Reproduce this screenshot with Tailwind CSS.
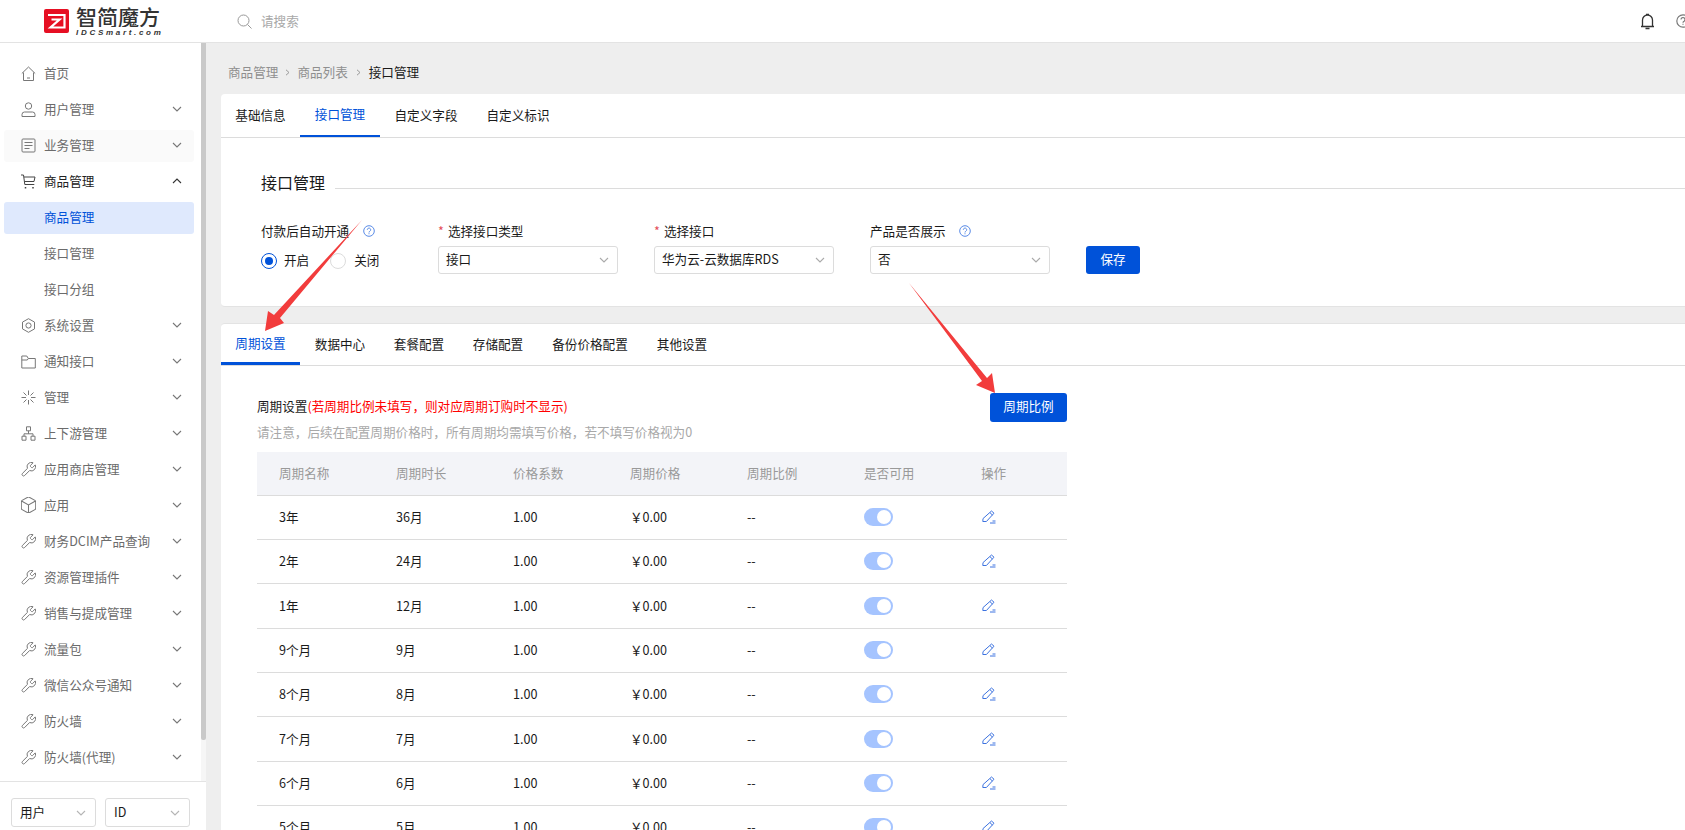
<!DOCTYPE html>
<html lang="zh-CN">
<head>
  <meta charset="UTF-8" />
  <title>接口管理</title>
  <script src="https://cdn.jsdelivr.net/npm/@tailwindcss/browser@4"></script>
</head>
<body class="h-[830px] w-[1685px] overflow-hidden bg-[#eeeeee] text-[12.6px] leading-5 text-[#1a1a1a] font-['Noto_Sans_CJK_SC',sans-serif]">

  <!-- icon sprites -->
  <svg class="hidden">
    <symbol id="i-wrench" viewBox="1.500 1.500 21 21"><path fill="none" stroke="currentColor" stroke-width="1.400" d="M14.700 6.300a1 1 0 0 0 0 1.400l1.600 1.600a1 1 0 0 0 1.400 0l3.770-3.770a6 6 0 0 1-7.940 7.940l-6.910 6.910a2.120 2.120 0 0 1-3-3l6.910-6.910a6 6 0 0 1 7.940-7.940l-3.760 3.760z"/></symbol>
    <symbol id="i-chevron" viewBox="0 0 12 12"><path fill="none" stroke="currentColor" stroke-width="1.100" d="M2 4l4 4 4-4"/></symbol>
    <symbol id="i-help" viewBox="0 0 12 12"><circle cx="6" cy="6" r="5.300" fill="none" stroke="currentColor"/><path fill="none" stroke="currentColor" d="M4.300 4.800a1.700 1.700 0 1 1 2.600 1.400c-.6.300-.9.600-.9 1.300"/><path fill="currentColor" d="M5.500 8.300h1v1h-1z"/></symbol>
    <symbol id="i-edit" viewBox="0 0 14 14"><path fill="none" stroke="currentColor" d="M9.500 1L12 3.200 4.400 11.500H.8L1 8.600zM8 2.700l2.400 2.300M8 13h5.500M10.500 11h3"/></symbol>
  </svg>

  <!-- top bar -->
  <header class="flex h-[43px] items-center border-b border-[#e3e3e3] bg-white">
    <div class="ml-[44px] flex w-[193px] items-center gap-[7px]">
      <svg class="h-[24px] w-[25px] shrink-0" viewBox="0 0 25 24">
        <rect width="25" height="24" rx="2" fill="#e60f23"/>
        <path fill="none" stroke="#fff" stroke-width="2.200" d="M4 6h16.500v12.500H10M7.500 10.500h8l-9 8h3.500"/>
      </svg>
      <div class="flex w-[84px] flex-col">
        <span class="h-[21px] overflow-hidden text-[21px] leading-[21px] font-medium whitespace-nowrap text-[#333]">智简魔方</span>
        <span class="mt-[1px] text-[8px] leading-[9px] font-bold tracking-[2.700px] whitespace-nowrap text-[#333] italic font-['Liberation_Sans',sans-serif]">IDCSmart.com</span>
      </div>
    </div>
    <svg class="h-[15px] w-[15px] text-[#999]" viewBox="0 0 15 15"><circle cx="6.500" cy="6.500" r="5.500" fill="none" stroke="currentColor"/><path stroke="currentColor" d="M10.500 10.500l4 4"/></svg>
    <span class="ml-[9px] text-[#a8a8a8]">请搜索</span>
    <div class="ml-auto flex items-center gap-[21px]">
      <svg class="h-[17px] w-[15px] text-[#333]" viewBox="0 0 15 17"><path fill="none" stroke="currentColor" stroke-width="1.300" d="M1 13.500h13M2.500 13.500V7a5 5 0 0 1 10 0v6.500M6 1.500h3M5.500 15.500h4"/></svg>
      <svg class="-mr-[5px] h-[14px] w-[14px] text-[#777]" viewBox="0 0 12 12"><use href="#i-help"/></svg>
    </div>
  </header>

  <div class="flex h-[787px]">
    <!-- sidebar -->
    <aside class="flex w-[206px] shrink-0 flex-col bg-white">
      <div class="flex h-[738px]">
        <nav class="h-full w-[201px] overflow-hidden pt-[12px] pr-[7px] pl-[4px] text-[#6b6b6b]">
          <a class="flex h-[36px] items-center rounded-[3px] pl-[17px]">
            <svg class="mr-[8px] h-[15px] w-[15px] text-[#777]" viewBox="0 0 15 15"><path fill="none" stroke="currentColor" d="M.8 7.500L7.500 1l6.700 6.500M2.500 6.500v8h10v-8M6 12h3"/></svg>首页</a>
          <a class="flex h-[36px] items-center rounded-[3px] pl-[17px]">
            <svg class="mr-[8px] h-[15px] w-[15px] text-[#777]" viewBox="0 0 15 15"><circle cx="7.500" cy="4" r="3.200" fill="none" stroke="currentColor"/><path fill="none" stroke="currentColor" d="M1 14.500v-2a2.500 2.500 0 0 1 2.500-2.500h8a2.500 2.500 0 0 1 2.500 2.500v2z"/></svg>用户管理
            <svg class="mr-[11px] ml-auto h-[12px] w-[12px] text-[#777]"><use href="#i-chevron"/></svg></a>
          <a class="mt-[3px] mb-[1px] flex h-[32px] items-center rounded-[3px] bg-[#fafafa] pb-[2px] pl-[17px]">
            <svg class="mr-[8px] h-[15px] w-[15px] text-[#777]" viewBox="0 0 15 15"><rect x="1" y="1" width="13" height="13" rx="1" fill="none" stroke="currentColor"/><path stroke="currentColor" d="M3.500 4.500h8M3.500 7.500h8M3.500 10.500h5"/></svg>业务管理
            <svg class="mr-[11px] ml-auto h-[12px] w-[12px] text-[#777]"><use href="#i-chevron"/></svg></a>
          <a class="flex h-[36px] items-center rounded-[3px] pl-[17px] text-[#222]">
            <svg class="mr-[8px] h-[15px] w-[15px] text-[#444]" viewBox="0 0 15 15"><path fill="none" stroke="currentColor" d="M0 1h2.500l1.300 9.500h9.500M3 3h11l-1 4.500H3.500"/><path stroke="currentColor" stroke-width="1.500" d="M4.500 13v1.500M12 13v1.500"/></svg>商品管理
            <svg class="mr-[11px] ml-auto h-[12px] w-[12px] rotate-180 text-[#333]"><use href="#i-chevron"/></svg></a>
          <a class="mt-[3px] mb-[1px] flex h-[32px] items-center rounded-[3px] bg-[#dfe9fd] pb-[2px] pl-[40px] text-[#0052d9]">商品管理</a>
          <a class="flex h-[36px] items-center pl-[40px]">接口管理</a>
          <a class="flex h-[36px] items-center pl-[40px]">接口分组</a>
          <a class="flex h-[36px] items-center pl-[17px]">
            <svg class="mr-[8px] h-[15px] w-[15px] text-[#777]" viewBox="0 0 15 15"><path fill="none" stroke="currentColor" d="M7.500.7l6 3.400v6.800l-6 3.400-6-3.400V4.100z"/><circle cx="7.500" cy="7.500" r="2.600" fill="none" stroke="currentColor"/></svg>系统设置
            <svg class="mr-[11px] ml-auto h-[12px] w-[12px] text-[#777]"><use href="#i-chevron"/></svg></a>
          <a class="flex h-[36px] items-center pl-[17px]">
            <svg class="mr-[8px] h-[15px] w-[15px] text-[#777]" viewBox="0 0 15 15"><path fill="none" stroke="currentColor" d="M.8 14V2h5l1.500 2.500h7V14zM.8 6h5.500l1-1.500"/></svg>通知接口
            <svg class="mr-[11px] ml-auto h-[12px] w-[12px] text-[#777]"><use href="#i-chevron"/></svg></a>
          <a class="flex h-[36px] items-center pl-[17px]">
            <svg class="mr-[8px] h-[15px] w-[15px] text-[#777]" viewBox="0 0 15 15"><path fill="none" stroke="currentColor" d="M7.500.5v4.500M7.500 10v4.500M.5 7.500h4.500M10 7.500h4.500M2.500 2.500l3 3M12.500 2.500l-3 3M2.500 12.500l3-3M12.500 12.500l-3-3"/></svg>管理
            <svg class="mr-[11px] ml-auto h-[12px] w-[12px] text-[#777]"><use href="#i-chevron"/></svg></a>
          <a class="flex h-[36px] items-center pl-[17px]">
            <svg class="mr-[8px] h-[15px] w-[15px] text-[#777]" viewBox="0 0 15 15"><path fill="none" stroke="currentColor" d="M5.500.8h4v4h-4zM1 10.200h4v4H1zM10 10.200h4v4h-4zM7.500 4.800v3M3 10.200V7.800h9v2.400"/></svg>上下游管理
            <svg class="mr-[11px] ml-auto h-[12px] w-[12px] text-[#777]"><use href="#i-chevron"/></svg></a>
          <a class="flex h-[36px] items-center pl-[17px]">
            <svg class="mr-[8px] h-[15px] w-[15px] text-[#777]"><use href="#i-wrench"/></svg>应用商店管理
            <svg class="mr-[11px] ml-auto h-[12px] w-[12px] text-[#777]"><use href="#i-chevron"/></svg></a>
          <a class="flex h-[36px] items-center pl-[17px]">
            <svg class="mr-[8px] h-[16px] w-[15px] text-[#777]" viewBox="3 2 18 20"><path fill="none" stroke="currentColor" stroke-width="1.300" d="M21 8a2 2 0 0 0-1-1.730l-7-4a2 2 0 0 0-2 0l-7 4A2 2 0 0 0 3 8v8a2 2 0 0 0 1 1.730l7 4a2 2 0 0 0 2 0l7-4A2 2 0 0 0 21 16ZM3.300 7 12 12l8.700-5M12 22V12"/></svg>应用
            <svg class="mr-[11px] ml-auto h-[12px] w-[12px] text-[#777]"><use href="#i-chevron"/></svg></a>
          <a class="flex h-[36px] items-center pl-[17px]">
            <svg class="mr-[8px] h-[15px] w-[15px] text-[#777]"><use href="#i-wrench"/></svg>财务DCIM产品查询
            <svg class="mr-[11px] ml-auto h-[12px] w-[12px] text-[#777]"><use href="#i-chevron"/></svg></a>
          <a class="flex h-[36px] items-center pl-[17px]">
            <svg class="mr-[8px] h-[15px] w-[15px] text-[#777]"><use href="#i-wrench"/></svg>资源管理插件
            <svg class="mr-[11px] ml-auto h-[12px] w-[12px] text-[#777]"><use href="#i-chevron"/></svg></a>
          <a class="flex h-[36px] items-center pl-[17px]">
            <svg class="mr-[8px] h-[15px] w-[15px] text-[#777]"><use href="#i-wrench"/></svg>销售与提成管理
            <svg class="mr-[11px] ml-auto h-[12px] w-[12px] text-[#777]"><use href="#i-chevron"/></svg></a>
          <a class="flex h-[36px] items-center pl-[17px]">
            <svg class="mr-[8px] h-[15px] w-[15px] text-[#777]"><use href="#i-wrench"/></svg>流量包
            <svg class="mr-[11px] ml-auto h-[12px] w-[12px] text-[#777]"><use href="#i-chevron"/></svg></a>
          <a class="flex h-[36px] items-center pl-[17px]">
            <svg class="mr-[8px] h-[15px] w-[15px] text-[#777]"><use href="#i-wrench"/></svg>微信公众号通知
            <svg class="mr-[11px] ml-auto h-[12px] w-[12px] text-[#777]"><use href="#i-chevron"/></svg></a>
          <a class="flex h-[36px] items-center pl-[17px]">
            <svg class="mr-[8px] h-[15px] w-[15px] text-[#777]"><use href="#i-wrench"/></svg>防火墙
            <svg class="mr-[11px] ml-auto h-[12px] w-[12px] text-[#777]"><use href="#i-chevron"/></svg></a>
          <a class="flex h-[36px] items-center pl-[17px]">
            <svg class="mr-[8px] h-[15px] w-[15px] text-[#777]"><use href="#i-wrench"/></svg>防火墙(代理)
            <svg class="mr-[11px] ml-auto h-[12px] w-[12px] text-[#777]"><use href="#i-chevron"/></svg></a>
        </nav>
        <!-- scrollbar -->
        <div class="flex w-[5px] flex-col bg-[#f6f6f6]">
          <div class="h-[697px] rounded-b-[2px] bg-[#c9c9c9]"></div>
        </div>
      </div>
      <!-- search type selects -->
      <div class="flex flex-1 gap-[9px] border-t border-[#e3e3e3] pt-[16px] pl-[11px] text-[#1a1a1a]">
        <div class="flex h-[29px] w-[85px] items-center justify-between rounded-[3px] border border-[#dcdcdc] pr-[8px] pb-[2px] pl-[8px]">用户<svg class="mt-[2px] h-[12px] w-[12px] text-[#b5b5b5]"><use href="#i-chevron"/></svg></div>
        <div class="flex h-[29px] w-[85px] items-center justify-between rounded-[3px] border border-[#dcdcdc] pr-[8px] pb-[2px] pl-[8px]">ID<svg class="mt-[2px] h-[12px] w-[12px] text-[#b5b5b5]"><use href="#i-chevron"/></svg></div>
      </div>
    </aside>

    <!-- main -->
    <main class="min-w-0 flex-1 pt-[19px] pl-[15px]">
      <div class="flex h-5 items-center pl-[7px] text-[#8f8f8f]">
        <span>商品管理</span>
        <svg class="mx-[6px] h-[7px] w-[7px] text-[#999]" viewBox="0 0 7 7"><path fill="none" stroke="currentColor" d="M2 .8l3 2.700-3 2.700"/></svg>
        <span>商品列表</span>
        <svg class="mr-[7px] ml-[7px] h-[7px] w-[7px] text-[#999]" viewBox="0 0 7 7"><path fill="none" stroke="currentColor" d="M2 .8l3 2.700-3 2.700"/></svg>
        <span class="text-[#1a1a1a]">接口管理</span>
      </div>

      <!-- interface card -->
      <section class="mt-[12px] h-[213px] rounded-l-[4px] border-b border-[#e3e3e3] bg-white">
        <div class="flex h-[44px] border-b border-[#dcdcdc]">
          <a class="flex w-[79px] items-center justify-center pb-[2px]">基础信息</a>
          <a class="flex w-[80px] items-center justify-center border-b-2 border-[#0052d9] pb-[1px] text-[#0052d9]">接口管理</a>
          <a class="flex w-[92px] items-center justify-center pb-[2px]">自定义字段</a>
          <a class="flex w-[92px] items-center justify-center pb-[2px]">自定义标识</a>
        </div>
        <div class="pl-[40px]">
          <div class="mt-[32px] flex h-6">
            <h2 class="text-[16px] leading-6">接口管理</h2>
            <div class="mt-[18px] ml-[10px] h-px flex-1 bg-[#dcdcdc]"></div>
          </div>
          <div class="mt-[27px] flex">
            <div class="w-[177px]">
              <div class="flex h-5 items-center">付款后自动开通<svg class="ml-[14px] h-[12px] w-[12px] text-[#5a8be6]"><use href="#i-help"/></svg></div>
              <div class="mt-[9px] flex items-center">
                <span class="flex h-[16px] w-[16px] items-center justify-center rounded-full border-[1.500px] border-[#0052d9]"><span class="h-[8px] w-[8px] rounded-full bg-[#0052d9]"></span></span>
                <span class="ml-[7px] pb-[1px]">开启</span>
                <span class="ml-[21px] h-[16px] w-[16px] rounded-full border border-[#dcdcdc]"></span>
                <span class="ml-[8px] pb-[1px]">关闭</span>
              </div>
            </div>
            <div class="w-[216px]">
              <div class="flex h-5 items-center"><span class="mr-[4px] text-[#e34d59]">*</span>选择接口类型</div>
              <div class="mt-[5px] flex h-[28px] w-[180px] items-center justify-between rounded-[3px] border border-[#dcdcdc] pr-[7px] pb-[2px] pl-[7px]">接口<svg class="mt-[2px] h-[12px] w-[12px] text-[#aaa]"><use href="#i-chevron"/></svg></div>
            </div>
            <div class="w-[216px]">
              <div class="flex h-5 items-center"><span class="mr-[4px] text-[#e34d59]">*</span>选择接口</div>
              <div class="mt-[5px] flex h-[28px] w-[180px] items-center justify-between rounded-[3px] border border-[#dcdcdc] pr-[7px] pb-[2px] pl-[7px]">华为云-云数据库RDS<svg class="mt-[2px] h-[12px] w-[12px] text-[#aaa]"><use href="#i-chevron"/></svg></div>
            </div>
            <div class="w-[216px]">
              <div class="flex h-5 items-center">产品是否展示<svg class="ml-[13px] h-[12px] w-[12px] text-[#5a8be6]"><use href="#i-help"/></svg></div>
              <div class="mt-[5px] flex h-[28px] w-[180px] items-center justify-between rounded-[3px] border border-[#dcdcdc] pr-[7px] pb-[2px] pl-[7px]">否<svg class="mt-[2px] h-[12px] w-[12px] text-[#aaa]"><use href="#i-chevron"/></svg></div>
            </div>
            <button class="mt-[25px] h-[28px] w-[54px] rounded-[3px] bg-[#0052d9] pb-[2px] text-white">保存</button>
          </div>
        </div>
      </section>

      <!-- period card -->
      <section class="mt-[16px] rounded-l-[4px] border-t border-[#e3e3e3] bg-white">
        <div class="flex h-[42px] border-b border-[#dcdcdc]">
          <a class="flex w-[79px] items-center justify-center border-b-[3px] border-[#0052d9] text-[#0052d9]">周期设置</a>
          <a class="flex w-[80px] items-center justify-center pb-[2px]">数据中心</a>
          <a class="flex w-[78px] items-center justify-center pb-[2px]">套餐配置</a>
          <a class="flex w-[80px] items-center justify-center pb-[2px]">存储配置</a>
          <a class="flex w-[104px] items-center justify-center pb-[2px]">备份价格配置</a>
          <a class="flex w-[80px] items-center justify-center pb-[2px]">其他设置</a>
        </div>
        <div class="pt-[31px] pl-[36px]">
          <div class="flex h-5 w-[810px] items-center justify-between">
            <p class="pb-[2px]">周期设置<span class="text-[#ff0000]">(若周期比例未填写，则对应周期订购时不显示)</span></p>
            <button class="h-[29px] w-[77px] shrink-0 rounded-[3px] bg-[#0052d9] pb-[2px] text-white">周期比例</button>
          </div>
          <p class="mt-[5px] text-[#a8a8a8]">请注意，后续在配置周期价格时，所有周期均需填写价格，若不填写价格视为0</p>
          <table class="mt-[10px] w-[810px] table-fixed border-collapse">
            <colgroup><col class="w-[117px]" /><col class="w-[117px]" /><col class="w-[117px]" /><col class="w-[117px]" /><col class="w-[117px]" /><col class="w-[117px]" /><col /></colgroup>
            <thead class="bg-[#f3f4f8] text-left text-[#999]">
              <tr class="h-[43px] border-b border-[#dcdcdc]">
                <th class="pl-[22px] font-normal">周期名称</th><th class="pl-[22px] font-normal">周期时长</th><th class="pl-[22px] font-normal">价格系数</th><th class="pl-[22px] font-normal">周期价格</th><th class="pl-[22px] font-normal">周期比例</th><th class="pl-[22px] font-normal">是否可用</th><th class="pl-[22px] font-normal">操作</th>
              </tr>
            </thead>
            <tbody>
              <tr class="h-[44px] border-b border-[#dcdcdc]">
                <td class="pl-[22px]">3年</td><td class="pl-[22px]">36月</td><td class="pl-[22px]">1.00</td><td class="pl-[22px]">￥0.00</td><td class="pl-[22px]">--</td>
                <td class="pl-[22px]"><span class="flex h-[18px] w-[29px] items-center justify-end rounded-full bg-[#a5c4ff] pr-[2px]"><span class="h-[14px] w-[14px] rounded-full bg-white"></span></span></td>
                <td class="pl-[23px]"><svg class="h-[14px] w-[14px] text-[#3d73e0]"><use href="#i-edit"/></svg></td>
              </tr>
              <tr class="h-[44px] border-b border-[#dcdcdc]">
                <td class="pl-[22px]">2年</td><td class="pl-[22px]">24月</td><td class="pl-[22px]">1.00</td><td class="pl-[22px]">￥0.00</td><td class="pl-[22px]">--</td>
                <td class="pl-[22px]"><span class="flex h-[18px] w-[29px] items-center justify-end rounded-full bg-[#a5c4ff] pr-[2px]"><span class="h-[14px] w-[14px] rounded-full bg-white"></span></span></td>
                <td class="pl-[23px]"><svg class="h-[14px] w-[14px] text-[#3d73e0]"><use href="#i-edit"/></svg></td>
              </tr>
              <tr class="h-[45px] border-b border-[#dcdcdc]">
                <td class="pl-[22px]">1年</td><td class="pl-[22px]">12月</td><td class="pl-[22px]">1.00</td><td class="pl-[22px]">￥0.00</td><td class="pl-[22px]">--</td>
                <td class="pl-[22px]"><span class="flex h-[18px] w-[29px] items-center justify-end rounded-full bg-[#a5c4ff] pr-[2px]"><span class="h-[14px] w-[14px] rounded-full bg-white"></span></span></td>
                <td class="pl-[23px]"><svg class="h-[14px] w-[14px] text-[#3d73e0]"><use href="#i-edit"/></svg></td>
              </tr>
              <tr class="h-[44px] border-b border-[#dcdcdc]">
                <td class="pl-[22px]">9个月</td><td class="pl-[22px]">9月</td><td class="pl-[22px]">1.00</td><td class="pl-[22px]">￥0.00</td><td class="pl-[22px]">--</td>
                <td class="pl-[22px]"><span class="flex h-[18px] w-[29px] items-center justify-end rounded-full bg-[#a5c4ff] pr-[2px]"><span class="h-[14px] w-[14px] rounded-full bg-white"></span></span></td>
                <td class="pl-[23px]"><svg class="h-[14px] w-[14px] text-[#3d73e0]"><use href="#i-edit"/></svg></td>
              </tr>
              <tr class="h-[44px] border-b border-[#dcdcdc]">
                <td class="pl-[22px]">8个月</td><td class="pl-[22px]">8月</td><td class="pl-[22px]">1.00</td><td class="pl-[22px]">￥0.00</td><td class="pl-[22px]">--</td>
                <td class="pl-[22px]"><span class="flex h-[18px] w-[29px] items-center justify-end rounded-full bg-[#a5c4ff] pr-[2px]"><span class="h-[14px] w-[14px] rounded-full bg-white"></span></span></td>
                <td class="pl-[23px]"><svg class="h-[14px] w-[14px] text-[#3d73e0]"><use href="#i-edit"/></svg></td>
              </tr>
              <tr class="h-[45px] border-b border-[#dcdcdc]">
                <td class="pl-[22px]">7个月</td><td class="pl-[22px]">7月</td><td class="pl-[22px]">1.00</td><td class="pl-[22px]">￥0.00</td><td class="pl-[22px]">--</td>
                <td class="pl-[22px]"><span class="flex h-[18px] w-[29px] items-center justify-end rounded-full bg-[#a5c4ff] pr-[2px]"><span class="h-[14px] w-[14px] rounded-full bg-white"></span></span></td>
                <td class="pl-[23px]"><svg class="h-[14px] w-[14px] text-[#3d73e0]"><use href="#i-edit"/></svg></td>
              </tr>
              <tr class="h-[44px] border-b border-[#dcdcdc]">
                <td class="pl-[22px]">6个月</td><td class="pl-[22px]">6月</td><td class="pl-[22px]">1.00</td><td class="pl-[22px]">￥0.00</td><td class="pl-[22px]">--</td>
                <td class="pl-[22px]"><span class="flex h-[18px] w-[29px] items-center justify-end rounded-full bg-[#a5c4ff] pr-[2px]"><span class="h-[14px] w-[14px] rounded-full bg-white"></span></span></td>
                <td class="pl-[23px]"><svg class="h-[14px] w-[14px] text-[#3d73e0]"><use href="#i-edit"/></svg></td>
              </tr>
              <tr class="h-[44px] border-b border-[#dcdcdc]">
                <td class="pl-[22px]">5个月</td><td class="pl-[22px]">5月</td><td class="pl-[22px]">1.00</td><td class="pl-[22px]">￥0.00</td><td class="pl-[22px]">--</td>
                <td class="pl-[22px]"><span class="flex h-[18px] w-[29px] items-center justify-end rounded-full bg-[#a5c4ff] pr-[2px]"><span class="h-[14px] w-[14px] rounded-full bg-white"></span></span></td>
                <td class="pl-[23px]"><svg class="h-[14px] w-[14px] text-[#3d73e0]"><use href="#i-edit"/></svg></td>
              </tr>
            </tbody>
          </table>
        </div>
      </section>
    </main>
  </div>

  <!-- red annotation arrows drawn over the screenshot -->
  <svg class="pointer-events-none absolute top-0 left-0 h-[830px] w-[1685px]" viewBox="0 0 1685 830">
    <polygon fill="#f23c3c" points="362,220 280,318 284,323 265,331 268,311 274,315"/>
    <polygon fill="#f23c3c" points="909,283 987,378 992,373 995,393 976,385 982,381"/>
  </svg>
</body>
</html>
